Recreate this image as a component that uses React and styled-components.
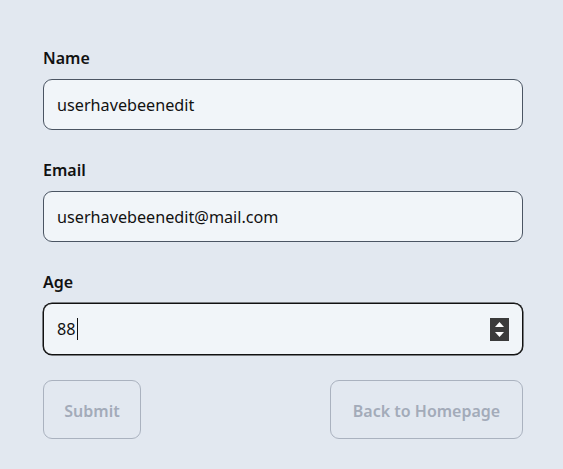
import React from "react";
import styled, { createGlobalStyle } from "styled-components";

const Global = createGlobalStyle`
  html, body { margin: 0; padding: 0; background: #e2e8f0; }
  body { font-family: "Segoe UI", "Noto Sans", sans-serif; color: #111; }
`;

const Page = styled.div`
  min-height: 469px;
  padding: 46px 0 0 43px;
  box-sizing: border-box;
`;

const Form = styled.form`
  width: 480px;
  display: flex;
  flex-direction: column;
  gap: 28px;
`;

const Field = styled.div`
  display: flex;
  flex-direction: column;
  gap: 9px;
`;

const Label = styled.label`
  font-size: 16px;
  line-height: 24px;
  font-weight: 600;
  color: #111;
`;

const Box = styled.div`
  height: ${(p) => (p.$focused ? 52 : 51)}px;
  box-sizing: border-box;
  display: flex;
  align-items: center;
  padding: 0 12px 0 13px;
  background: #f1f5f9;
  border: 1px solid ${(p) => (p.$focused ? "#111" : "#4b5563")};
  box-shadow: ${(p) => (p.$focused ? "0 0 0 0.5px #111" : "none")};
  border-radius: 9px;
`;

const Input = styled.input`
  flex: ${(p) => (p.$fit ? "0 0 auto" : "1")};
  field-sizing: ${(p) => (p.$fit ? "content" : "fixed")};
  min-width: 0;
  border: none;
  outline: none;
  background: transparent;
  font: inherit;
  font-size: 16.2px;
  color: #111;
  padding: 0;
  caret-color: transparent;
`;

const Caret = styled.span`
  width: 1px;
  height: 22px;
  background: #111;
  margin-left: 1px;
`;

const Spacer = styled.div`
  flex: 1;
`;

const Spin = styled.div`
  width: 19px;
  height: 23px;
  background: #3b3b3b;
  display: flex;
  align-items: center;
  justify-content: center;
  margin-right: 1px;
`;

const Buttons = styled.div`
  display: flex;
  justify-content: space-between;
  margin-top: -3px;
`;

const Button = styled.button`
  height: 59px;
  padding: 0 20px;
  min-width: ${(p) => p.$w}px;
  box-sizing: border-box;
  background: transparent;
  border: 1px solid #aab2bf;
  border-radius: 9px;
  font: inherit;
  font-size: 16px;
  font-weight: 600;
  color: #a3abb9;
  padding-top: 2px;
`;

export default function App() {
  return (
    <>
      <Global />
      <Page>
        <Form onSubmit={(e) => e.preventDefault()}>
          <Field>
            <Label>Name</Label>
            <Box>
              <Input defaultValue="userhavebeenedit" />
            </Box>
          </Field>
          <Field>
            <Label>Email</Label>
            <Box>
              <Input defaultValue="userhavebeenedit@mail.com" />
            </Box>
          </Field>
          <Field>
            <Label>Age</Label>
            <Box $focused>
              <Input $fit defaultValue="88" />
              <Caret />
              <Spacer />
              <Spin>
                <svg width="11" height="17" viewBox="0 0 11 17">
                  <path d="M5.5 1 L10 6 H1 Z" fill="#fff" />
                  <path d="M5.5 16 L10 11 H1 Z" fill="#fff" />
                </svg>
              </Spin>
            </Box>
          </Field>
          <Buttons>
            <Button type="button" disabled $w={98}>Submit</Button>
            <Button type="button" disabled $w={193}>Back to Homepage</Button>
          </Buttons>
        </Form>
      </Page>
    </>
  );
}
